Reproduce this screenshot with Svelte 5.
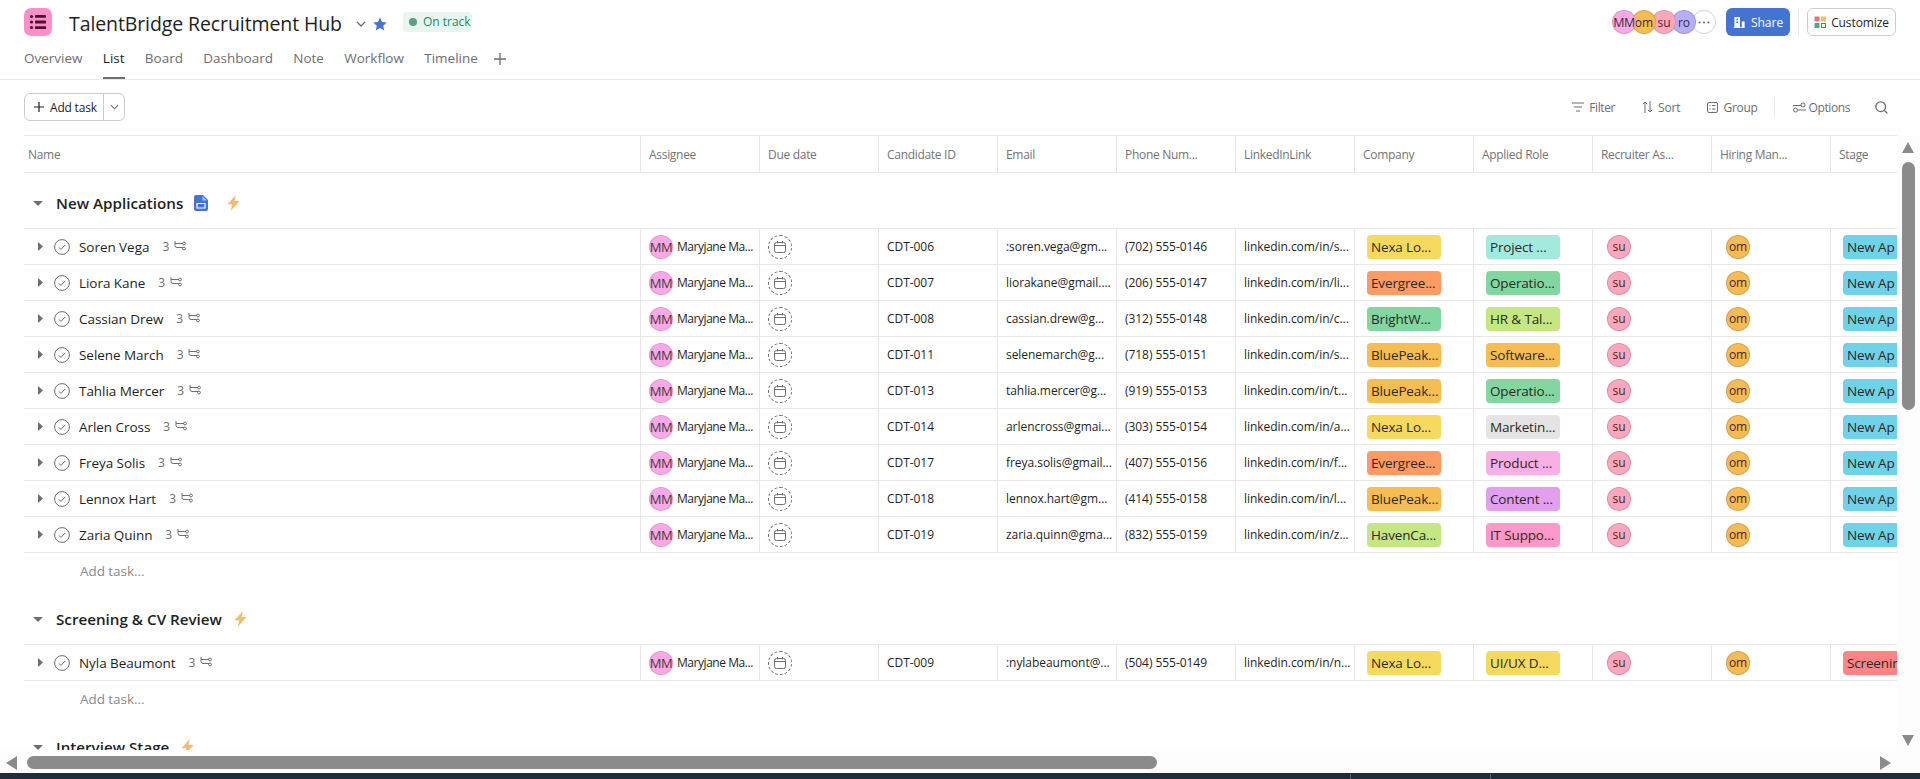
<script>
  const tabs = ['Overview', 'List', 'Board', 'Dashboard', 'Note', 'Workflow', 'Timeline'];
  const cols = ['Assignee', 'Due date', 'Candidate ID', 'Email', 'Phone Num...', 'LinkedInLink', 'Company', 'Applied Role', 'Recruiter As...', 'Hiring Man...', 'Stage'];
  const tagColors = {
    yellow: '#f8d960', orange: '#fc9b64', green: '#82d6a0', amber: '#f6bd52', lime: '#c4e784',
    teal: '#a2eadd', gray: '#e4e4e4', pink: '#f9aee5', purple: '#e29fee', hot: '#fd98ca', sky: '#6fd2e8', red: '#fd8585'
  };
  const nexa = ['Nexa Lo...', 'yellow'], ever = ['Evergree...', 'orange'], bright = ['BrightW...', 'green'], blue = ['BluePeak...', 'amber'], haven = ['HavenCa...', 'lime'];
  const ap = ['New Ap', 'sky'];
  const groups = [
    {
      title: 'New Applications', doc: true,
      rows: [
        ['Soren Vega', 'CDT-006', ':soren.vega@gm...', '(702) 555-0146', 's', nexa, ['Project ...', 'teal'], ap],
        ['Liora Kane', 'CDT-007', 'liorakane@gmail....', '(206) 555-0147', 'li', ever, ['Operatio...', 'green'], ap],
        ['Cassian Drew', 'CDT-008', 'cassian.drew@g...', '(312) 555-0148', 'c', bright, ['HR & Tal...', 'lime'], ap],
        ['Selene March', 'CDT-011', 'selenemarch@g...', '(718) 555-0151', 's', blue, ['Software...', 'amber'], ap],
        ['Tahlia Mercer', 'CDT-013', 'tahlia.mercer@g...', '(919) 555-0153', 't', blue, ['Operatio...', 'green'], ap],
        ['Arlen Cross', 'CDT-014', 'arlencross@gmai...', '(303) 555-0154', 'a', nexa, ['Marketin...', 'gray'], ap],
        ['Freya Solis', 'CDT-017', 'freya.solis@gmail...', '(407) 555-0156', 'f', ever, ['Product ...', 'pink'], ap],
        ['Lennox Hart', 'CDT-018', 'lennox.hart@gm...', '(414) 555-0158', 'l', blue, ['Content ...', 'purple'], ap],
        ['Zaria Quinn', 'CDT-019', 'zaria.quinn@gma...', '(832) 555-0159', 'z', haven, ['IT Suppo...', 'hot'], ap]
      ]
    },
    {
      title: 'Screening & CV Review', doc: false,
      rows: [['Nyla Beaumont', 'CDT-009', ':nylabeaumont@...', '(504) 555-0149', 'n', nexa, ['UI/UX D...', 'yellow'], ['Screenin', 'red']]]
    },
    { title: 'Interview Stage', doc: false, rows: [] }
  ];
</script>

<div class="page">
  <header class="top">
    <div class="logo">
      <svg viewBox="0 0 28 28" width="28" height="28" aria-hidden="true">
        <g fill="#4f1030">
          <circle cx="7.5" cy="8.5" r="1.6" /><circle cx="7.5" cy="14" r="1.6" /><circle cx="7.5" cy="19.5" r="1.6" />
          <rect x="11" y="7" width="11" height="2.8" rx=".4" /><rect x="11" y="12.6" width="11" height="2.8" rx=".4" /><rect x="11" y="18.2" width="11" height="2.8" rx=".4" />
        </g>
      </svg>
    </div>
    <h1>TalentBridge Recruitment Hub</h1>
    <svg class="title-chev" viewBox="0 0 10 6" width="10" height="6" aria-hidden="true"><path d="M1 1l4 4 4-4" fill="none" stroke="#6d6e6f" stroke-width="1.3" /></svg>
    <svg class="star" viewBox="0 0 14 14" width="14" height="14" aria-hidden="true"><path d="M7 .6l2 4.4 4.7.5-3.5 3.2 1 4.7L7 11l-4.2 2.4 1-4.7L.3 5.5 5 5z" fill="#4573d2" /></svg>
    <div class="status"><span class="dot"></span>On track</div>
    <div class="spacer"></div>
    <div class="faces">
      <span class="face f-mm">MM</span><span class="face f-om">om</span><span class="face f-su">su</span><span class="face f-ro">ro</span>
      <span class="face f-more"><svg viewBox="0 0 12 3" width="12" height="3" aria-hidden="true"><circle cx="1.5" cy="1.5" r="1.1" fill="#6d6e6f" /><circle cx="6" cy="1.5" r="1.1" fill="#6d6e6f" /><circle cx="10.5" cy="1.5" r="1.1" fill="#6d6e6f" /></svg></span>
    </div>
    <button class="share">
      <svg viewBox="0 0 14 14" width="13" height="13" aria-hidden="true"><path d="M1.5 1h6v11h2V6h3v7H.5v-1h1z M3.5 3v1.6h2V3z M3.5 6v1.6h2V6z" fill="#fff" fill-rule="evenodd" /></svg>
      Share
    </button>
    <span class="vsep"></span>
    <button class="customize">
      <svg viewBox="0 0 13 13" width="13" height="13" aria-hidden="true">
        <rect x="0.5" y="0.5" width="5" height="5" fill="#e8716f" /><rect x="7" y="0.5" width="5" height="5" fill="#f1bd6c" />
        <rect x="0.5" y="7" width="5" height="5" fill="#5da283" /><rect x="7.5" y="7.5" width="4" height="4" fill="none" stroke="#4573d2" />
      </svg>
      Customize
    </button>
  </header>

  <nav class="tabs">
    {#each tabs as t}
      <span class="tab" class:active={t === 'List'}>{t}</span>
    {/each}
    <svg class="tab-plus" viewBox="0 0 12 12" width="12" height="12" aria-hidden="true"><path d="M6 0v12M0 6h12" stroke="#6d6e6f" stroke-width="1.3" /></svg>
  </nav>

  <div class="toolbar">
    <div class="add">
      <span class="add-main">
        <svg viewBox="0 0 10 10" width="10" height="10" aria-hidden="true"><path d="M5 0v10M0 5h10" stroke="#1e1f21" stroke-width="1.2" /></svg>
        Add task
      </span>
      <span class="add-more"><svg viewBox="0 0 10 6" width="9" height="6" aria-hidden="true"><path d="M1 1l4 4 4-4" fill="none" stroke="#6d6e6f" stroke-width="1.2" /></svg></span>
    </div>
    <div class="spacer"></div>
    <span class="tool t-filter">
      <svg viewBox="0 0 12 10" width="12" height="10" aria-hidden="true"><path d="M0 1h12M2 5h8M4 9h4" stroke="#6d6e6f" stroke-width="1" /></svg><span class="w-filter">Filter</span>
    </span>
    <span class="tool t-sort">
      <svg viewBox="0 0 11 12" width="11" height="12" aria-hidden="true"><path d="M3 12V1M.8 3.2L3 1l2.2 2.2M8 0v11M5.8 8.8L8 11l2.2-2.2" fill="none" stroke="#6d6e6f" stroke-width="1" /></svg>Sort
    </span>
    <span class="tool t-group">
      <svg viewBox="0 0 11 11" width="11" height="11" aria-hidden="true"><rect x=".5" y=".5" width="10" height="10" rx="1.5" fill="none" stroke="#6d6e6f" /><path d="M2.5 3.5h1M5 3.5h3.5M2.5 7h1M5 7h3.5" stroke="#6d6e6f" /></svg>Group
    </span>
    <span class="tool-sep"></span>
    <span class="tool t-options">
      <svg viewBox="0 0 13 11" width="13" height="11" aria-hidden="true"><path d="M0 3.5h8M5 8h8" stroke="#6d6e6f" /><circle cx="10" cy="3" r="2" fill="#fff" stroke="#6d6e6f" /><circle cx="2.5" cy="8" r="2" fill="#fff" stroke="#6d6e6f" /></svg>Options
    </span>
    <svg class="search" viewBox="0 0 13 13" width="13" height="13" aria-hidden="true"><circle cx="5.7" cy="5.7" r="4.9" fill="none" stroke="#6d6e6f" stroke-width="1.3" /><path d="M9.2 9.2l3.2 3.2" stroke="#6d6e6f" stroke-width="1.3" /></svg>
  </div>

  <div class="content">
    <div class="table">
      <div class="thead">
        <div class="c-name th">Name</div>
        {#each cols as c}<div class="c th">{c}</div>{/each}
      </div>
      {#each groups as g}
        <div class="ghead">
          <svg class="g-tri" viewBox="0 0 10 5" width="10" height="5" aria-hidden="true"><path d="M0 0h10L5 5z" fill="#6d6e6f" /></svg>
          <span class="g-title">{g.title}</span>
          {#if g.doc}
            <svg class="g-doc" viewBox="0 0 14 16" width="14" height="16" aria-hidden="true"><path d="M2 0h7l5 5v9a2 2 0 01-2 2H2a2 2 0 01-2-2V2a2 2 0 012-2z" fill="#4573d2" /><path d="M3 8.5h8v4.5H3z M3 8.5h4" fill="none" stroke="#fff" stroke-width="1.2" /><path d="M8.5 1l4.5 4.5H8.5z" fill="#a9c0ee" /></svg>
          {/if}
          <svg class="g-bolt" class:after-doc={g.doc} viewBox="0 0 13 16" width="13" height="16" aria-hidden="true"><path d="M8.8 0L.5 9.2h4.8L3.6 16l8.9-10H7.6z" fill="#f1bd6c" /></svg>
        </div>
        {#each g.rows as r}
          <div class="row">
            <div class="c-name td">
              <svg class="r-tri" viewBox="0 0 5 9" width="5" height="9" aria-hidden="true"><path d="M0 0l5 4.5L0 9z" fill="#6d6e6f" /></svg>
              <svg class="r-check" viewBox="0 0 16 16" width="16" height="16" aria-hidden="true"><circle cx="8" cy="8" r="7.4" fill="none" stroke="#6d6e6f" /><path d="M4.8 8.3l2.2 2.2 4.2-4.6" fill="none" stroke="#6d6e6f" /></svg>
              <span class="r-name">{r[0]}</span>
              <span class="r-count">3</span>
              <svg class="r-sub" viewBox="0 0 12 11" width="12" height="11" aria-hidden="true"><path d="M1 0v4.5a2 2 0 002 2h6M1 2.5h8" fill="none" stroke="#6d6e6f" /><circle cx="10" cy="2.5" r="1.4" fill="none" stroke="#6d6e6f" /><circle cx="10" cy="7.5" r="1.4" fill="none" stroke="#6d6e6f" /></svg>
            </div>
            <div class="c td"><span class="mm">MM</span><span class="txt assignee">Maryjane Ma...</span></div>
            <div class="c td">
              <span class="due">
                <svg viewBox="0 0 12 12" width="12" height="12" aria-hidden="true"><rect x=".5" y="1.5" width="11" height="10" rx="2" fill="none" stroke="#6d6e6f" /><path d="M.5 4.5h11M3.5 0v2.5M8.5 0v2.5" fill="none" stroke="#6d6e6f" /></svg>
              </span>
            </div>
            <div class="c td"><span class="txt">{r[1]}</span></div>
            <div class="c td"><span class="txt">{r[2]}</span></div>
            <div class="c td"><span class="txt">{r[3]}</span></div>
            <div class="c td"><span class="txt">linkedin.com/in/{r[4]}...</span></div>
            <div class="c td tagcell"><span class="tag" style="background:{tagColors[r[5][1]]}">{r[5][0]}</span></div>
            <div class="c td tagcell"><span class="tag" style="background:{tagColors[r[6][1]]}">{r[6][0]}</span></div>
            <div class="c td circ"><span class="pill su">su</span></div>
            <div class="c td circ"><span class="pill om">om</span></div>
            <div class="c td tagcell"><span class="tag stage" style="background:{tagColors[r[7][1]]}">{r[7][0]}</span></div>
          </div>
        {/each}
        {#if g.rows.length}<div class="addrow">Add task...</div>{/if}
      {/each}
    </div>
    <div class="vbar">
      <span class="arrow up"></span>
      <span class="vthumb"></span>
      <span class="arrow down"></span>
    </div>
  </div>

  <div class="hbar">
    <span class="arrow left"></span>
    <span class="hthumb"></span>
    <span class="arrow right"></span>
  </div>
  <div class="taskbar"><span class="tk tk1"></span><span class="tk tk2"></span></div>
</div>

<style>
  :global(body) { margin: 0; background: #fff; }
  .page {
    width: 1920px; height: 779px; overflow: hidden; display: flex; flex-direction: column;
    font-family: "Open Sans", "Noto Sans", sans-serif; color: #1e1f21; background: #fff;
  }
  .spacer { flex: 1; }
  button { font: inherit; cursor: default; }

  .top { height: 44px; flex: none; box-sizing: border-box; padding: 8px 24px 0; display: flex; align-items: flex-start; }
  .logo { width: 28px; height: 28px; border-radius: 7px; background: #fd8fc8; flex: none; }
  h1 { margin: 0 0 0 17px; font-size: 19.5px; font-weight: 500; line-height: 32px; white-space: nowrap; letter-spacing: -0.1px; }
  .title-chev { margin: 13px 0 0 14px; }
  .star { margin: 9px 0 0 7px; }
  .status {
    margin: 4px 0 0 16px; height: 20px; width: 69px; box-sizing: border-box; padding-left: 6px; border-radius: 4px; background: #e8f6ef; color: #1f8a62;
    font-size: 12px; line-height: 20px; display: flex; align-items: center; white-space: nowrap;
  }
  .dot { width: 8px; height: 8px; border-radius: 50%; background: #58a182; margin-right: 6px; flex: none; }
  .faces { display: flex; margin: 2px 10px 0 0; }
  .face {
    width: 24px; height: 24px; box-sizing: border-box; border-radius: 50%; border: 1px solid rgba(0,0,0,.12); display: flex; align-items: center; justify-content: center;
    font-size: 12px; color: #3b2a35; margin-right: -4px; position: relative; overflow: hidden;
  }
  .f-mm { background: #f9aae6; z-index: 5; letter-spacing: -.5px; font-size: 12.5px; }
  .f-om { background: #f6bb52; z-index: 4; }
  .f-su { background: #fda7bd; z-index: 3; }
  .f-ro { background: #b5aefa; z-index: 2; }
  .f-more { background: #fff; z-index: 1; border-color: #d5d5d5; margin-right: 0; }
  .share {
    width: 64px; height: 28px; border: 0; border-radius: 6px; background: #4573d2; color: #fff; font-size: 12px; padding: 0; flex: none;
    display: flex; align-items: center; justify-content: center; gap: 5px;
  }
  .vsep { width: 1px; height: 28px; background: #edeae9; margin: 0 8px; flex: none; }
  .customize {
    width: 89px; height: 28px; box-sizing: border-box; border: 1px solid #cfcbcb; border-radius: 6px; background: #fff; color: #1e1f21; font-size: 12px; padding: 0; flex: none; letter-spacing: -.1px;
    display: flex; align-items: center; justify-content: center; gap: 4px;
  }

  .tabs { height: 36px; flex: none; box-sizing: border-box; border-bottom: 1px solid #e8e8e8; padding-left: 24px; display: flex; gap: 20.3px; align-items: stretch; }
  .tab { font-size: 13.5px; font-weight: 500; color: #6d6e6f; line-height: 28px; position: relative; white-space: nowrap; }
  .tab.active { color: #1e1f21; }
  .tab.active::after { content: ''; position: absolute; left: 0; right: 0; bottom: 0; height: 2px; background: #6d6e6f; }
  .tab-plus { margin: 9px 0 0 -4px; }

  .toolbar { height: 55px; flex: none; box-sizing: border-box; padding: 13px 32px 0 24px; display: flex; align-items: flex-start; color: #6d6e6f; font-size: 12px; }
  .add { display: flex; height: 28px; box-sizing: border-box; border: 1px solid #cfcbcb; border-radius: 6px; color: #1e1f21; letter-spacing: -.2px; }
  .add-main { width: 79px; display: flex; align-items: center; justify-content: flex-start; padding-left: 9px; gap: 6px; box-sizing: border-box; border-right: 1px solid #cfcbcb; }
  .add-more { width: 20px; display: flex; align-items: center; justify-content: center; }
  .tool { display: flex; align-items: center; gap: 5px; height: 28px; white-space: nowrap; letter-spacing: -.15px; }
  .w-filter { letter-spacing: -.4px; }
  .t-filter { margin-right: 27px; }
  .t-sort { margin-right: 27px; }
  .t-group { letter-spacing: -.3px; }
  .t-options { gap: 3px; letter-spacing: -.4px; }
  .tool-sep { width: 1px; height: 20px; margin: 4px 18px 0 16px; background: #edeae9; }
  .search { margin: 8px 0 0 25px; }

  .content { flex: 1; min-height: 0; display: flex; }
  .table { flex: 1; min-width: 0; overflow: hidden; box-sizing: border-box; margin-left: 24px; font-size: 12px; letter-spacing: -.05px; }
  .thead { display: flex; height: 38px; box-sizing: border-box; border-top: 1px solid #e8e8e8; border-bottom: 1px solid #e8e8e8; color: #737475; letter-spacing: -.3px; }
  .row { display: flex; height: 36px; box-sizing: border-box; border-bottom: 1px solid #e8e8e8; }
  .c-name { width: 616px; flex: none; box-sizing: border-box; display: flex; align-items: center; }
  .c { width: 119px; flex: none; box-sizing: border-box; border-left: 1px solid #e8e8e8; padding-left: 8px; display: flex; align-items: center; white-space: nowrap; overflow: hidden; }
  .th.c-name { padding-left: 4px; }
  .ghead { height: 56px; box-sizing: border-box; border-bottom: 1px solid #e8e8e8; display: flex; align-items: center; padding: 5px 0 0 9px; }
  .g-title { font-size: 15.2px; font-weight: 600; margin-left: 13px; white-space: nowrap; letter-spacing: 0; }
  .g-doc { margin-left: 11px; }
  .g-bolt { margin-left: 12px; }
  .g-bolt.after-doc { margin-left: 19px; }
  .r-tri { margin-left: 14px; }
  .r-check { margin-left: 11px; }
  .r-name { font-size: 13.5px; margin-left: 9px; white-space: nowrap; letter-spacing: -.05px; }
  .r-count { margin-left: 13px; color: #6d6e6f; }
  .r-sub { margin-left: 4px; width: 14px; }
  .mm {
    width: 24px; height: 24px; border-radius: 50%; background: #f9aae6; box-shadow: inset 0 0 0 1px rgba(0,0,0,.1); flex: none; display: flex; align-items: center; justify-content: center;
    font-size: 13px; letter-spacing: -.4px; color: #4a3543; margin-right: 4px;
  }
  .txt { overflow: hidden; }
  .assignee { letter-spacing: -.45px; }
  .due { width: 24px; height: 24px; box-sizing: border-box; border: 1px dashed #6d6e6f; border-radius: 50%; display: flex; align-items: center; justify-content: center; flex: none; }
  .tagcell { padding-left: 12px; }
  .tag { width: 74px; height: 24px; box-sizing: border-box; border-radius: 4px; flex: none; padding-left: 4px; font-size: 13.5px; line-height: 24px; color: #2b2a22; overflow: hidden; white-space: nowrap; letter-spacing: -.15px; }
  .stage { width: 90px; }
  .circ { padding-left: 14px; }
  .pill { width: 24px; height: 24px; box-sizing: border-box; border-radius: 50%; border: 1px solid rgba(0,0,0,.14); flex: none; display: flex; align-items: center; justify-content: center; font-size: 12px; color: #3b2a2a; }
  .su { background: #fda7bd; }
  .om { background: #f6bb52; }
  .addrow { height: 36px; padding-left: 56px; font-size: 13.5px; line-height: 36px; color: #8a8b8c; }

  .vbar { width: 23px; flex: none; background: #fdfdfd; position: relative; }
  .vthumb { position: absolute; left: 5px; top: 27px; width: 13px; height: 248px; border-radius: 7px; background: #8b8b8b; }
  .arrow { position: absolute; width: 0; height: 0; border-style: solid; border-color: transparent; }
  .up { left: 5px; top: 7px; border-width: 0 6.5px 11px; border-bottom-color: #8b8b8b; }
  .down { left: 5px; top: 600px; border-width: 11px 6.5px 0; border-top-color: #8b8b8b; }
  .hbar { height: 23px; flex: none; background: #fdfdfd; position: relative; }
  .hthumb { position: absolute; left: 27px; top: 6px; width: 1130px; height: 13px; border-radius: 7px; background: #8b8b8b; }
  .left { left: 6px; top: 6px; border-width: 7px 11px 7px 0; border-right-color: #8b8b8b; }
  .right { left: 1880px; top: 6px; border-width: 7px 0 7px 11px; border-left-color: #8b8b8b; }
  .taskbar { height: 6px; flex: none; background: #1f2d3a; position: relative; }
  .tk { position: absolute; top: 1px; width: 1px; height: 5px; background: #55616c; }
  .tk1 { left: 1350px; }
  .tk2 { left: 1490px; }
</style>
